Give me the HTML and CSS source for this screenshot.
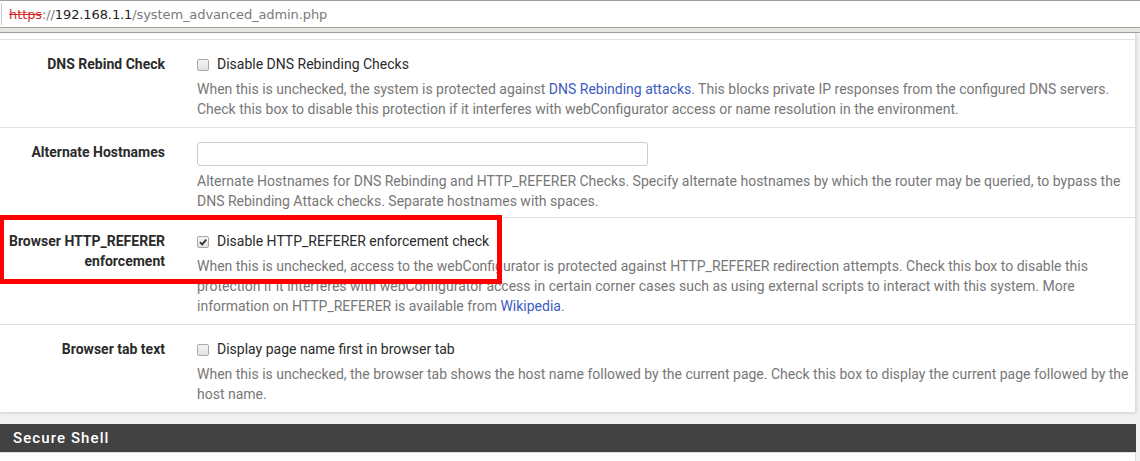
FILE: index.html
```html
<!DOCTYPE html>
<html>
<head>
<meta charset="utf-8">
<link rel="stylesheet" href="styles.css">
</head>
<body>
<div class="urlbar">
  <div class="urltext"><span class="proto">https</span><span class="dim">://</span><span class="host">192.168.1.1</span><span class="dim">/system_advanced_admin.php</span></div>
</div>
<div class="urlstrip"></div>
<div class="page">
  <div class="panel">
    <div class="row r1">
      <div class="lbl">DNS Rebind Check</div>
      <div class="ctl">
        <label class="chk"><span class="box"></span>Disable DNS Rebinding Checks</label>
        <div class="help">When this is unchecked, the system is protected against <a href="#">DNS Rebinding attacks</a>. This blocks private IP responses from the configured DNS servers. Check this box to disable this protection if it interferes with webConfigurator access or name resolution in the environment.</div>
      </div>
    </div>
    <div class="row r2">
      <div class="lbl">Alternate Hostnames</div>
      <div class="ctl">
        <div class="input"></div>
        <div class="help h2">Alternate Hostnames for DNS Rebinding and HTTP_REFERER Checks. Specify alternate hostnames by which the router may be queried, to bypass the DNS Rebinding Attack checks. Separate hostnames with spaces.</div>
      </div>
    </div>
    <div class="row r3">
      <div class="lbl">Browser HTTP_REFERER enforcement</div>
      <div class="ctl">
        <label class="chk"><span class="box checked"><svg viewBox="0 0 10 10" width="10" height="10"><path d="M2 5.2 L4.2 7.4 L8.2 2.6" fill="none" stroke="#333" stroke-width="1.8"/></svg></span>Disable HTTP_REFERER enforcement check</label>
        <div class="help h3">When this is unchecked, access to the webConfigurator is protected against HTTP_REFERER redirection attempts. Check this box to disable this protection if it interferes with webConfigurator access in certain corner cases such as using external scripts to interact with this system. More information on HTTP_REFERER is available from <a href="#">Wikipedia</a>.</div>
      </div>
    </div>
    <div class="row r4">
      <div class="lbl">Browser tab text</div>
      <div class="ctl">
        <label class="chk"><span class="box"></span>Display page name first in browser tab</label>
        <div class="help">When this is unchecked, the browser tab shows the host name followed by the current page. Check this box to display the current page followed by the host name.</div>
      </div>
    </div>
  </div>
  <div class="section">Secure Shell</div>
  <div class="panel2"></div>
  <div class="highlight"></div>
</div>
</body>
</html>
```
FILE: styles.css
```css
html, body {
  margin: 0;
  padding: 0;
  background: #ffffff;
  overflow: hidden;
}
body {
  width: 1140px;
  height: 461px;
  font-family: Roboto, "Liberation Sans", sans-serif;
}
.urlbar {
  height: 27px;
  border-top: 1px solid #9e9e9e;
  background: #ffffff;
  display: flex;
  align-items: center;
  box-sizing: border-box;
  padding-left: 9px;
  position: relative;
}
.urlbar::before {
  content: "";
  position: absolute;
  left: 1px;
  top: 2px;
  bottom: 2px;
  width: 1px;
  background: #c8c8c8;
}
.urltext {
  font-family: "DejaVu Sans", sans-serif;
  font-size: 13px;
  color: #7a7a7a;
  letter-spacing: -0.1px;
}
.proto {
  color: #d72b2b;
  text-decoration: line-through;
}
.dim { color: #7a7a7a; }
.host { color: #1e1e1e; }
.urlstrip {
  height: 4px;
  border-top: 1px solid #a3a3a3;
  border-bottom: 1px solid #a3a3a3;
  background: #e6e6e3;
}
.page {
  position: relative;
  background: #f1f1f1;
  height: 428px;
}
.panel {
  width: 1135px;
  background: #ffffff;
  border-right: 1px solid #dddddd;
  padding-top: 6px;
  box-shadow: 0 1px 3px rgba(0,0,0,0.16);
}
.row {
  display: grid;
  grid-template-columns: 181px 1fr;
  border-top: 1px solid #e1e1e1;
  padding: 14px 0 8px 0;
  font-size: 14px;
  line-height: 20px;
}
.r2 { padding-bottom: 6px; }
.r3 { padding-top: 13px; padding-bottom: 8px; }
.lbl {
  padding-right: 16px;
  text-align: right;
  font-weight: 700;
  color: #2b2b2b;
  padding-left: 4px;
}
.ctl {
  padding-left: 16px;
  padding-right: 4px;
}
.chk {
  display: flex;
  align-items: center;
  color: #2a2a2a;
  height: 20px;
}
.box {
  width: 10px;
  height: 10px;
  border: 1px solid #a8a8a8;
  border-radius: 2px;
  background: linear-gradient(#f4f4f4, #e2e2e2);
  margin-right: 8px;
  display: flex;
  align-items: center;
  justify-content: center;
  margin-top: 1px;
}
.box svg { display: block; }
.help {
  color: #777777;
  margin-top: 5px;
}
.h2 { margin-top: 5px; }
.h3 { margin-top: 5px; }
.help a {
  color: #3d5cbf;
  text-decoration: none;
}
.input {
  width: 449px;
  height: 22px;
  border: 1px solid #cccccc;
  border-radius: 3px;
  background: #fff;
}
.section {
  margin-top: 12px;
  width: 1123px;
  height: 28px;
  background: #424242;
  color: #ffffff;
  font-size: 15px;
  font-weight: 500;
  letter-spacing: 1.1px;
  line-height: 28px;
  padding-left: 13px;
}
.panel2 {
  width: 1135px;
  height: 20px;
  background: #ffffff;
  border-right: 1px solid #dddddd;
  border-top: 1px solid #e1e1e1;
}
.highlight {
  position: absolute;
  left: -1px;
  top: 182px;
  width: 493px;
  height: 59px;
  border: 5px solid #ff0000;
}
```
